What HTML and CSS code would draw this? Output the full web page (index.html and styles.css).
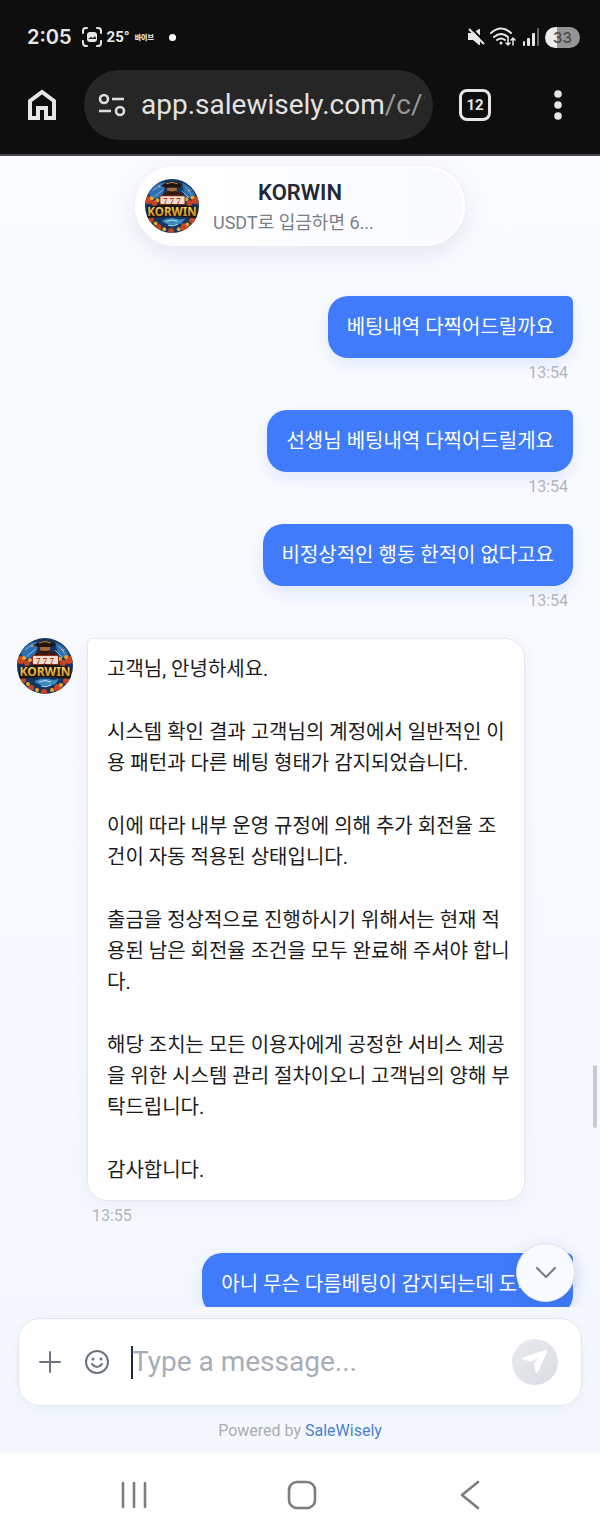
FILE: index.html
```html
<!DOCTYPE html>
<html lang="ko">
<head>
    <meta charset="UTF-8">
    <meta name="viewport" content="width=device-width, initial-scale=1.0">
    <title>KORWIN</title>
    <link rel="stylesheet" href="styles.css">
</head>
<body>
    <svg class="defs" aria-hidden="true">
        <defs>
            <clipPath id="round"><circle cx="28" cy="28" r="28"/></clipPath>
            <linearGradient id="gold" x1="0" y1="0" x2="0" y2="1">
                <stop offset="0" stop-color="#fff0a0"/>
                <stop offset="0.5" stop-color="#e9b43a"/>
                <stop offset="1" stop-color="#b8721a"/>
            </linearGradient>
            <symbol id="logo" viewBox="0 0 56 56">
                <g clip-path="url(#round)">
                    <rect width="56" height="56" fill="#17365f"/>
                    <path d="M4 14Q12 2 22 4L18 18 6 22zM38 4Q50 8 52 18L42 20z" fill="#2f6fb4"/>
                    <path d="M8 12l8-6M10 18l9-7M42 8l6 8M38 12l8 8" stroke="#7fb6dc" stroke-width="1"/>
                    <g fill="#c9441f">
                        <circle cx="4" cy="22" r="4"/><circle cx="10" cy="25" r="3"/><circle cx="52" cy="22" r="4"/>
                        <circle cx="46" cy="25" r="3"/><circle cx="6" cy="42" r="3"/><circle cx="49" cy="43" r="3"/>
                        <circle cx="14" cy="50" r="3"/><circle cx="41" cy="50" r="4"/><circle cx="27" cy="54" r="3"/>
                    </g>
                    <g fill="#e9a52c">
                        <circle cx="7" cy="20" r="2"/><circle cx="13" cy="22" r="2"/><circle cx="49" cy="19" r="2"/>
                        <circle cx="43" cy="21" r="2"/><circle cx="11" cy="46" r="2"/><circle cx="44" cy="47" r="2"/>
                        <circle cx="20" cy="52" r="2"/><circle cx="35" cy="52" r="2"/><circle cx="4" cy="39" r="1"/>
                        <circle cx="46" cy="12" r="1"/><circle cx="15" cy="8" r="1"/><circle cx="50" cy="39" r="1"/>
                    </g>
                    <path d="M17 7Q27 -1 39 6L35 9H21z" fill="#22140f"/>
                    <path d="M22 5q6-3 12 0" stroke="#c08a3c" fill="none"/>
                    <path d="M23 9h10v4q-5 6-10 0z" fill="#a8683a"/>
                    <path d="M23 12q5 2 10 0l-2 5h-6z" fill="#2a1610"/>
                    <path d="M17 18q2-5 7-5l4 3 4-3q6 0 8 5z" fill="#3b1c14"/>
                    <rect x="15" y="17" width="27" height="10" rx="2" fill="#8f2a1c"/>
                    <rect x="16" y="18" width="25" height="8" rx="1" fill="#eadfce"/>
                    <text x="28" y="26" class="logo-sevens">7 7 7</text>
                    <path d="M2 29Q28 24 54 29V41Q28 37 2 41z" fill="#1c1712"/>
                    <text x="28" y="38" class="logo-word">KORWIN</text>
                    <path d="M18 43q8-4 18-1l6-1-4 5q-10 5-20-2z" fill="#3d8cc0"/>
                    <path d="M22 44q6-3 12 0M24 48q5 2 10-1" stroke="#b7def0" fill="none"/>
                </g>
            </symbol>
        </defs>
    </svg>

    <header class="browser">
        <div class="status-bar">
            <span class="clock">2:05</span>
            <svg class="capture" width="20" height="20" viewBox="0 0 20 20" fill="none" stroke="#e6e6e6" stroke-width="2" stroke-linecap="round">
                <path d="M1 6V4q0-3 3-3h1M15 1h1q3 0 3 3v2M19 14v2q0 3-3 3h-1M5 19H4q-3 0-3-3v-2"/>
                <rect x="5" y="5" width="10" height="10" rx="3" fill="#e6e6e6" stroke="none"/>
                <path d="M6 12l3-2 2 1 2-2 1 2v1z" fill="#222" stroke="none"/>
            </svg>
            <span class="degrees">25°</span>
            <span class="ticker">바이브</span>
            <span class="dot"></span>
            <svg class="muted" width="18" height="18" viewBox="0 0 18 18">
                <path d="M1 5h5l6-4h1v16h-1l-6-5H1z" fill="#e8e8e8"/>
                <path d="M4 0l14 14" stroke="#0e0e0e" stroke-width="2"/>
                <path d="M2 1l15 15" stroke="#e8e8e8" stroke-width="2"/>
            </svg>
            <svg width="27" height="20" viewBox="0 0 27 20" fill="none" stroke="#e8e8e8" stroke-width="2" stroke-linecap="round">
                <path d="M1 6q10-9 20 0M4 10q7-6 14 0M7 13q4-3 8 0"/>
                <circle cx="11" cy="16" r="1.5" fill="#e8e8e8" stroke="none"/>
                <path d="M18 11v7M16 16l2 2 2-2M23 18v-7M21 13l2-2 2 2" stroke-width="1.5"/>
            </svg>
            <svg width="18" height="18" viewBox="0 0 18 18" fill="#e8e8e8">
                <rect x="1" y="13" width="2" height="5" rx="1"/>
                <rect x="5" y="10" width="3" height="8" rx="1"/>
                <rect x="10" y="5" width="3" height="13" rx="1"/>
                <rect x="15" y="0" width="2" height="18" rx="1" fill="#666"/>
            </svg>
            <span class="battery">33</span>
        </div>
        <div class="toolbar">
            <button class="tool" aria-label="Home">
                <svg width="30" height="34" viewBox="0 0 30 34" fill="none" stroke="#e6e6e6" stroke-width="4">
                    <path d="M3 30V13L15 4l12 9v17h-8V20h-8v10z"/>
                </svg>
            </button>
            <div class="address">
                <svg width="28" height="24" viewBox="0 0 28 24" fill="none" stroke="#dedede" stroke-width="2.6">
                    <circle cx="6" cy="6" r="4"/><path d="M14 6h12M1 18h12"/><circle cx="22" cy="18" r="4"/>
                </svg>
                <span class="url">app.salewisely.com<span class="path">/c/1</span></span>
            </div>
            <button class="tabs" aria-label="Tabs">12</button>
            <button class="tool" aria-label="Menu">
                <svg width="8" height="30" viewBox="0 0 8 30" fill="#e6e6e6">
                    <circle cx="4" cy="4" r="3.8"/><circle cx="4" cy="15" r="3.8"/><circle cx="4" cy="26" r="3.8"/>
                </svg>
            </button>
        </div>
    </header>

    <main class="chat">
        <div class="profile">
            <svg class="profile-avatar"><use href="#logo"/></svg>
            <div class="profile-text">
                <h1>KORWIN</h1>
                <p>USDT로 입금하면 6...</p>
            </div>
        </div>

        <div class="messages">
            <div class="message sent">
                <div class="bubble">베팅내역 다찍어드릴까요</div>
                <time>13:54</time>
            </div>
            <div class="message sent">
                <div class="bubble">선생님 베팅내역 다찍어드릴게요</div>
                <time>13:54</time>
            </div>
            <div class="message sent">
                <div class="bubble">비정상적인 행동 한적이 없다고요</div>
                <time>13:54</time>
            </div>
            <div class="message received">
                <svg class="avatar"><use href="#logo"/></svg>
                <div class="received-body">
                    <div class="bubble">
                        <p>고객님, 안녕하세요.</p>
                        <p>시스템 확인 결과 고객님의 계정에서 일반적인 이용 패턴과 다른 베팅 형태가 감지되었습니다.</p>
                        <p>이에 따라 내부 운영 규정에 의해 추가 회전율 조건이 자동 적용된 상태입니다.</p>
                        <p>출금을 정상적으로 진행하시기 위해서는 현재 적용된 남은 회전율 조건을 모두 완료해 주셔야 합니다.</p>
                        <p>해당 조치는 모든 이용자에게 공정한 서비스 제공을 위한 시스템 관리 절차이오니 고객님의 양해 부탁드립니다.</p>
                        <p>감사합니다.</p>
                    </div>
                    <time>13:55</time>
                </div>
            </div>
            <div class="message sent">
                <div class="bubble">아니 무슨 다름베팅이 감지되는데 도대체</div>
            </div>
        </div>

        <span class="scroll-thumb"></span>
        <button class="scroll-down" aria-label="Scroll to bottom">
            <svg width="22" height="14" viewBox="0 0 22 14" fill="none" stroke="#75787f" stroke-width="2" stroke-linecap="round" stroke-linejoin="round">
                <path d="M2 2l9 9 9-9"/>
            </svg>
        </button>
    </main>

    <footer class="footer">
        <form class="composer">
            <button type="button" class="icon-button" aria-label="Attach">
                <svg width="24" height="24" viewBox="0 0 24 24" stroke="#6b7280" stroke-width="2" stroke-linecap="round">
                    <path d="M12 2v20M2 12h20"/>
                </svg>
            </button>
            <button type="button" class="icon-button" aria-label="Emoji">
                <svg width="26" height="26" viewBox="0 0 26 26" fill="none" stroke="#6b7280" stroke-width="2" stroke-linecap="round">
                    <circle cx="13" cy="13" r="11"/>
                    <path d="M8 15q5 6 10 0"/>
                    <circle cx="9" cy="10" r="1.5" fill="#6b7280" stroke="none"/>
                    <circle cx="17" cy="10" r="1.5" fill="#6b7280" stroke="none"/>
                </svg>
            </button>
            <span class="caret"></span>
            <input type="text" placeholder="Type a message..." aria-label="Type a message">
            <button type="button" class="send" aria-label="Send">
                <svg width="26" height="26" viewBox="0 0 26 26">
                    <path d="M1 8.500L23.500 1Q25.500 1 25 3L16 23Q14.500 25 13.500 22.500L11.500 15 17 8 9.500 13 1.500 10.500Q0 9.500 1 8.500z" fill="#fff"/>
                </svg>
            </button>
        </form>
        <p class="powered">Powered by <a href="#">SaleWisely</a></p>
    </footer>

    <nav class="system-nav">
        <button aria-label="Recents">
            <svg width="28" height="28" viewBox="0 0 28 28" stroke="#7d7d7d" stroke-width="2.6" stroke-linecap="round">
                <path d="M3 2v24M14 2v24M25 2v24"/>
            </svg>
        </button>
        <button aria-label="Home">
            <svg width="30" height="30" viewBox="0 0 30 30" fill="none" stroke="#7d7d7d" stroke-width="2.6">
                <rect x="2" y="2" width="26" height="26" rx="8"/>
            </svg>
        </button>
        <button aria-label="Back">
            <svg width="20" height="30" viewBox="0 0 20 30" fill="none" stroke="#7d7d7d" stroke-width="2.6" stroke-linecap="round" stroke-linejoin="round">
                <path d="M18 2L2 15l16 13"/>
            </svg>
        </button>
    </nav>
</body>
</html>
```

FILE: styles.css
```css
* {
    margin: 0;
    padding: 0;
    box-sizing: border-box;
}

body {
    display: flex;
    flex-direction: column;
    height: 100vh;
    font-family: Roboto, 'Noto Sans CJK KR', sans-serif;
    background: #fff;
    color: #1b1b1d;
}

button {
    display: flex;
    align-items: center;
    justify-content: center;
    border: none;
    background: none;
    font-family: inherit;
    cursor: pointer;
}

svg {
    display: block;
    flex-shrink: 0;
}

.defs {
    position: absolute;
    width: 0;
    height: 0;
}

.logo-sevens {
    font: bold 9px 'Liberation Serif', serif;
    text-anchor: middle;
    fill: #c4281c;
}

.logo-word {
    font: bold 12px 'Noto Sans', sans-serif;
    text-anchor: middle;
    fill: url(#gold);
}

/* browser chrome */
.browser {
    background: #0e0e0e;
    border-bottom: 2px solid #47464c;
    padding-top: 20px;
    color: #e8e8e8;
}

.status-bar {
    display: flex;
    align-items: center;
    height: 34px;
    padding: 0 20px 0 27px;
    gap: 5px;
}

.clock {
    font: 600 20px Inter, sans-serif;
}

.capture {
    margin-left: 5px;
}

.degrees {
    font-size: 15px;
    font-weight: 700;
}

.ticker {
    font: 900 7px 'Noto Sans CJK KR', sans-serif;
}

.dot {
    width: 7px;
    height: 7px;
    margin-left: 10px;
    border-radius: 50%;
    background: #fff;
}

.muted {
    margin-left: auto;
}

.battery {
    width: 35px;
    border-radius: 11px;
    background: linear-gradient(90deg, #ececec 33%, #949494 33%);
    color: #4c4c4c;
    font: 500 15px/21px Inter, sans-serif;
    text-align: center;
}

.toolbar {
    display: flex;
    align-items: center;
    height: 100px;
    padding: 2px 22px 0 22px;
}

.tool {
    width: 40px;
    height: 48px;
}

.address {
    display: flex;
    flex: 1;
    align-items: center;
    gap: 15px;
    min-width: 0;
    height: 70px;
    margin: 0 26px 0 22px;
    padding: 0 8px 0 14px;
    border-radius: 35px;
    background: #262626;
}

.url {
    overflow: hidden;
    color: #e2e2e2;
    font-size: 28px;
    line-height: 40px;
    white-space: nowrap;
}

.path {
    color: #999;
}

.tabs {
    width: 32px;
    height: 32px;
    margin-right: 47px;
    border: 3px solid #e6e6e6;
    border-radius: 8px;
    color: #e6e6e6;
    font-size: 15px;
    font-weight: 700;
}

/* conversation */
.chat {
    position: relative;
    flex: 1;
    min-height: 0;
    overflow: hidden;
    padding-top: 10px;
    background: linear-gradient(#fafbff, #f4f8fe);
}

.profile {
    display: flex;
    align-items: center;
    gap: 14px;
    width: 330px;
    height: 80px;
    margin: 0 auto 50px;
    padding: 0 8px;
    border: 2px solid #fff;
    border-radius: 40px;
    background: linear-gradient(90deg, #fff, #f8faff);
    box-shadow: 0 8px 24px rgba(60, 80, 130, 0.12);
}

.profile-avatar {
    width: 54px;
    height: 54px;
}

.profile-text {
    width: 174px;
    padding-top: 3px;
}

.profile h1 {
    color: #1f2937;
    font-size: 22px;
    font-weight: 600;
    line-height: 30px;
    text-align: center;
}

.profile p {
    color: #7b7f87;
    font-size: 18px;
    line-height: 30px;
    white-space: nowrap;
}

.messages {
    display: flex;
    flex-direction: column;
    gap: 27px;
    padding: 0 27px 0 17px;
}

.message {
    display: flex;
}

.sent {
    flex-direction: column;
    align-items: flex-end;
}

.bubble {
    font-size: 20px;
    line-height: 31px;
}

.sent .bubble {
    padding: 16px 19px 15px;
    border-radius: 20px 6px 20px 20px;
    background: #3f7bfa;
    color: #fff;
    box-shadow: 0 6px 16px rgba(63, 123, 250, 0.14);
}

.message time {
    display: block;
    margin-top: 5px;
    padding: 0 5px;
    color: #b3b6bc;
    font-size: 16px;
    line-height: 20px;
}

.received {
    align-items: flex-start;
    gap: 14px;
}

.avatar {
    width: 56px;
    height: 56px;
}

.received-body {
    max-width: 438px;
}

.received .bubble {
    padding: 15px 13px 14px 19px;
    border: 1px solid #e6e9ef;
    border-radius: 6px 20px 20px 20px;
    background: #fff;
    box-shadow: 0 4px 16px rgba(60, 80, 130, 0.06);
    word-break: break-all;
}

.received p + p {
    margin-top: 32px;
}

.scroll-thumb {
    position: absolute;
    right: 3px;
    bottom: 179px;
    width: 4px;
    height: 63px;
    border-radius: 2px;
    background: #c8cbd0;
}

.scroll-down {
    position: absolute;
    right: 25px;
    bottom: 5px;
    width: 59px;
    height: 59px;
    border: 1px solid #dfe3ea;
    border-radius: 50%;
    background: #f7faff;
    box-shadow: 0 4px 16px rgba(40, 60, 110, 0.14);
}

/* message box */
.footer {
    padding: 11px 18px 12px;
    background: #f4f8fe;
}

.composer {
    display: flex;
    align-items: center;
    height: 88px;
    padding: 0 23px 0 18px;
    border: 1px solid #e3e7ee;
    border-radius: 22px;
    background: #fff;
    box-shadow: 0 4px 16px rgba(60, 80, 130, 0.06);
}

.icon-button {
    width: 26px;
    height: 40px;
    margin-right: 21px;
}

.caret {
    width: 2px;
    height: 33px;
    margin-right: -1px;
    background: #1f2937;
}

.composer input {
    flex: 1;
    min-width: 0;
    border: none;
    outline: none;
    background: none;
    color: #1f2937;
    font: 28px/36px Roboto, sans-serif;
}

.composer input::placeholder {
    color: #a7adb7;
}

.send {
    width: 46px;
    height: 46px;
    border-radius: 50%;
    background: linear-gradient(135deg, #e8eaee, #d9dce2);
}

.powered {
    margin-top: 15px;
    color: #a9adb5;
    font-size: 16px;
    line-height: 20px;
    text-align: center;
}

.powered a {
    color: #4a7fd4;
    text-decoration: none;
}

.system-nav {
    display: flex;
    height: 84px;
    padding: 0 46px 0 50px;
    background: #fff;
}

.system-nav button {
    flex: 1;
}
```
